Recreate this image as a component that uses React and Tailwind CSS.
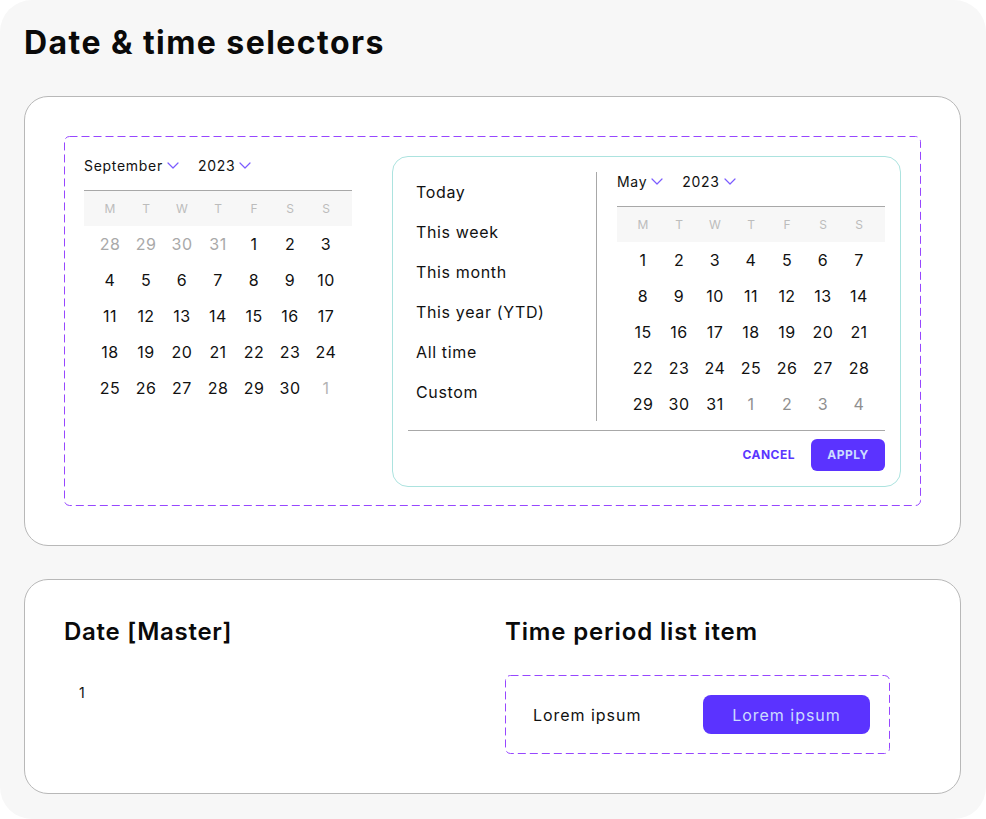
const WEEKDAYS = ["M", "T", "W", "T", "F", "S", "S"];

const SEPT = [
  [["28", 0], ["29", 0], ["30", 0], ["31", 0], ["1", 1], ["2", 1], ["3", 1]],
  [["4", 1], ["5", 1], ["6", 1], ["7", 1], ["8", 1], ["9", 1], ["10", 1]],
  [["11", 1], ["12", 1], ["13", 1], ["14", 1], ["15", 1], ["16", 1], ["17", 1]],
  [["18", 1], ["19", 1], ["20", 1], ["21", 1], ["22", 1], ["23", 1], ["24", 1]],
  [["25", 1], ["26", 1], ["27", 1], ["28", 1], ["29", 1], ["30", 1], ["1", 2]],
];

const MAY = [
  [["1", 1], ["2", 1], ["3", 1], ["4", 1], ["5", 1], ["6", 1], ["7", 1]],
  [["8", 1], ["9", 1], ["10", 1], ["11", 1], ["12", 1], ["13", 1], ["14", 1]],
  [["15", 1], ["16", 1], ["17", 1], ["18", 1], ["19", 1], ["20", 1], ["21", 1]],
  [["22", 1], ["23", 1], ["24", 1], ["25", 1], ["26", 1], ["27", 1], ["28", 1]],
  [["29", 1], ["30", 1], ["31", 1], ["1", 3], ["2", 3], ["3", 3], ["4", 3]],
];

const PRESETS = ["Today", "This week", "This month", "This year (YTD)", "All time", "Custom"];

function Chevron() {
  return (
    <svg width="12" height="7" viewBox="0 0 12 7" fill="none" className="ml-[4px] mt-[1px]">
      <path d="M1 1l5 5 5-5" stroke="#7b5cff" strokeWidth="1.2" strokeLinecap="round" strokeLinejoin="round" />
    </svg>
  );
}

// figma-style dashed outline, drawn over the box
function DashedOutline() {
  return (
    <svg className="pointer-events-none absolute inset-0 h-full w-full overflow-visible" fill="none">
      <rect
        x="0.5"
        y="0.5"
        width="calc(100% - 1px)"
        height="calc(100% - 1px)"
        rx="5"
        stroke="#9747ff"
        strokeWidth="1"
        strokeDasharray="8 4"
      />
    </svg>
  );
}

function dayColor(kind) {
  if (kind === 1) return "text-[#111111]";
  if (kind === 2) return "text-[#b4b4b4]";
  if (kind === 3) return "text-[#8f8f8f]";
  return "text-[#a9a9a9]";
}

function Calendar({ month, weeks }) {
  return (
    <div className="w-[268px]">
      <div className="flex h-[18px] items-center gap-[19px] text-[14px] tracking-[0.05em] text-[#111111]">
        <div className="flex items-center">
          <span>{month}</span>
          <Chevron />
        </div>
        <div className="flex items-center">
          <span>2023</span>
          <Chevron />
        </div>
      </div>
      <div className="mt-4 grid h-[36px] grid-cols-7 items-center border-t border-[#a8a8a8] bg-[#f7f7f7] px-2 text-center text-[12px] text-[#bcbcbc]">
        {WEEKDAYS.map((d, i) => (
          <span key={i}>{d}</span>
        ))}
      </div>
      <div className="px-2">
        {weeks.map((row, r) => (
          <div key={r} className="grid h-[36px] grid-cols-7 items-center text-center text-[16px] tracking-[0.03em]">
            {row.map(([n, kind], c) => (
              <span key={c} className={dayColor(kind)}>
                {n}
              </span>
            ))}
          </div>
        ))}
      </div>
    </div>
  );
}

export default function App() {
  return (
    <div className="h-[819px] w-[986px] bg-white" style={{ fontFamily: "Inter, 'Noto Sans', sans-serif" }}>
      <div className="h-full rounded-[32px] bg-[#f7f7f7] pl-6 pr-[25px] pt-[23px]">
        <h1 className="h-[40px] text-[32px] font-bold leading-[40px] tracking-[0.045em] text-[#0a0a0a]">
          Date &amp; time selectors
        </h1>

        <div className="mt-[33px] h-[450px] rounded-3xl border border-[#b8b8b8] bg-white p-[39px]">
          <div className="relative flex h-[370px] items-start gap-10 p-5">
            <DashedOutline />
            <Calendar month="September" weeks={SEPT} />

            <div className="h-[331px] w-[509px] rounded-2xl border border-[#ace3df] px-[15px] pt-[15px]">
              <div className="flex">
                <div className="h-[249px] w-[190px] border-r border-[#a8a8a8] pl-2">
                  {PRESETS.map((p) => (
                    <div key={p} className="flex h-[40px] items-center text-[16px] tracking-[0.04em] text-[#111111]">
                      {p}
                    </div>
                  ))}
                </div>
                <div className="pl-5">
                  <Calendar month="May" weeks={MAY} />
                </div>
              </div>
              <div className="mt-2 border-t border-[#a8a8a8]" />
              <div className="mt-2 flex items-center justify-end gap-4">
                <button className="text-[12px] font-bold tracking-[0.04em] text-[#5a36ff]">CANCEL</button>
                <button className="h-[32px] w-[74px] rounded-md bg-[#5b33ff] text-[12px] font-bold tracking-[0.04em] text-[#cbdcff]">
                  APPLY
                </button>
              </div>
            </div>
          </div>
        </div>

        <div className="mt-[33px] h-[215px] rounded-3xl border border-[#b8b8b8] bg-white px-[39px] pt-[39px]">
          <div className="grid grid-cols-[417px_1fr] gap-x-6">
            <div>
              <h2 className="h-[26px] text-[24px] font-semibold leading-[26px] tracking-[0.03em] text-[#0a0a0a]">
                Date [Master]
              </h2>
              <div className="mt-[38px] pl-[15px] text-[14px] leading-[20px] text-[#111111]">1</div>
            </div>
            <div>
              <h2 className="h-[26px] text-[24px] font-semibold leading-[26px] tracking-[0.035em] text-[#0a0a0a]">
                Time period list item
              </h2>
              <div className="relative mt-[30px] flex h-[79px] w-[385px] items-center justify-between pl-[28px] pr-5">
                <DashedOutline />
                <span className="text-[16px] tracking-[0.06em] text-[#111111]">Lorem ipsum</span>
                <button className="h-[39px] w-[167px] rounded-lg bg-[#5b33ff] text-[16px] tracking-[0.06em] text-[#cbdcff]">
                  Lorem ipsum
                </button>
              </div>
            </div>
          </div>
        </div>
      </div>
    </div>
  );
}
